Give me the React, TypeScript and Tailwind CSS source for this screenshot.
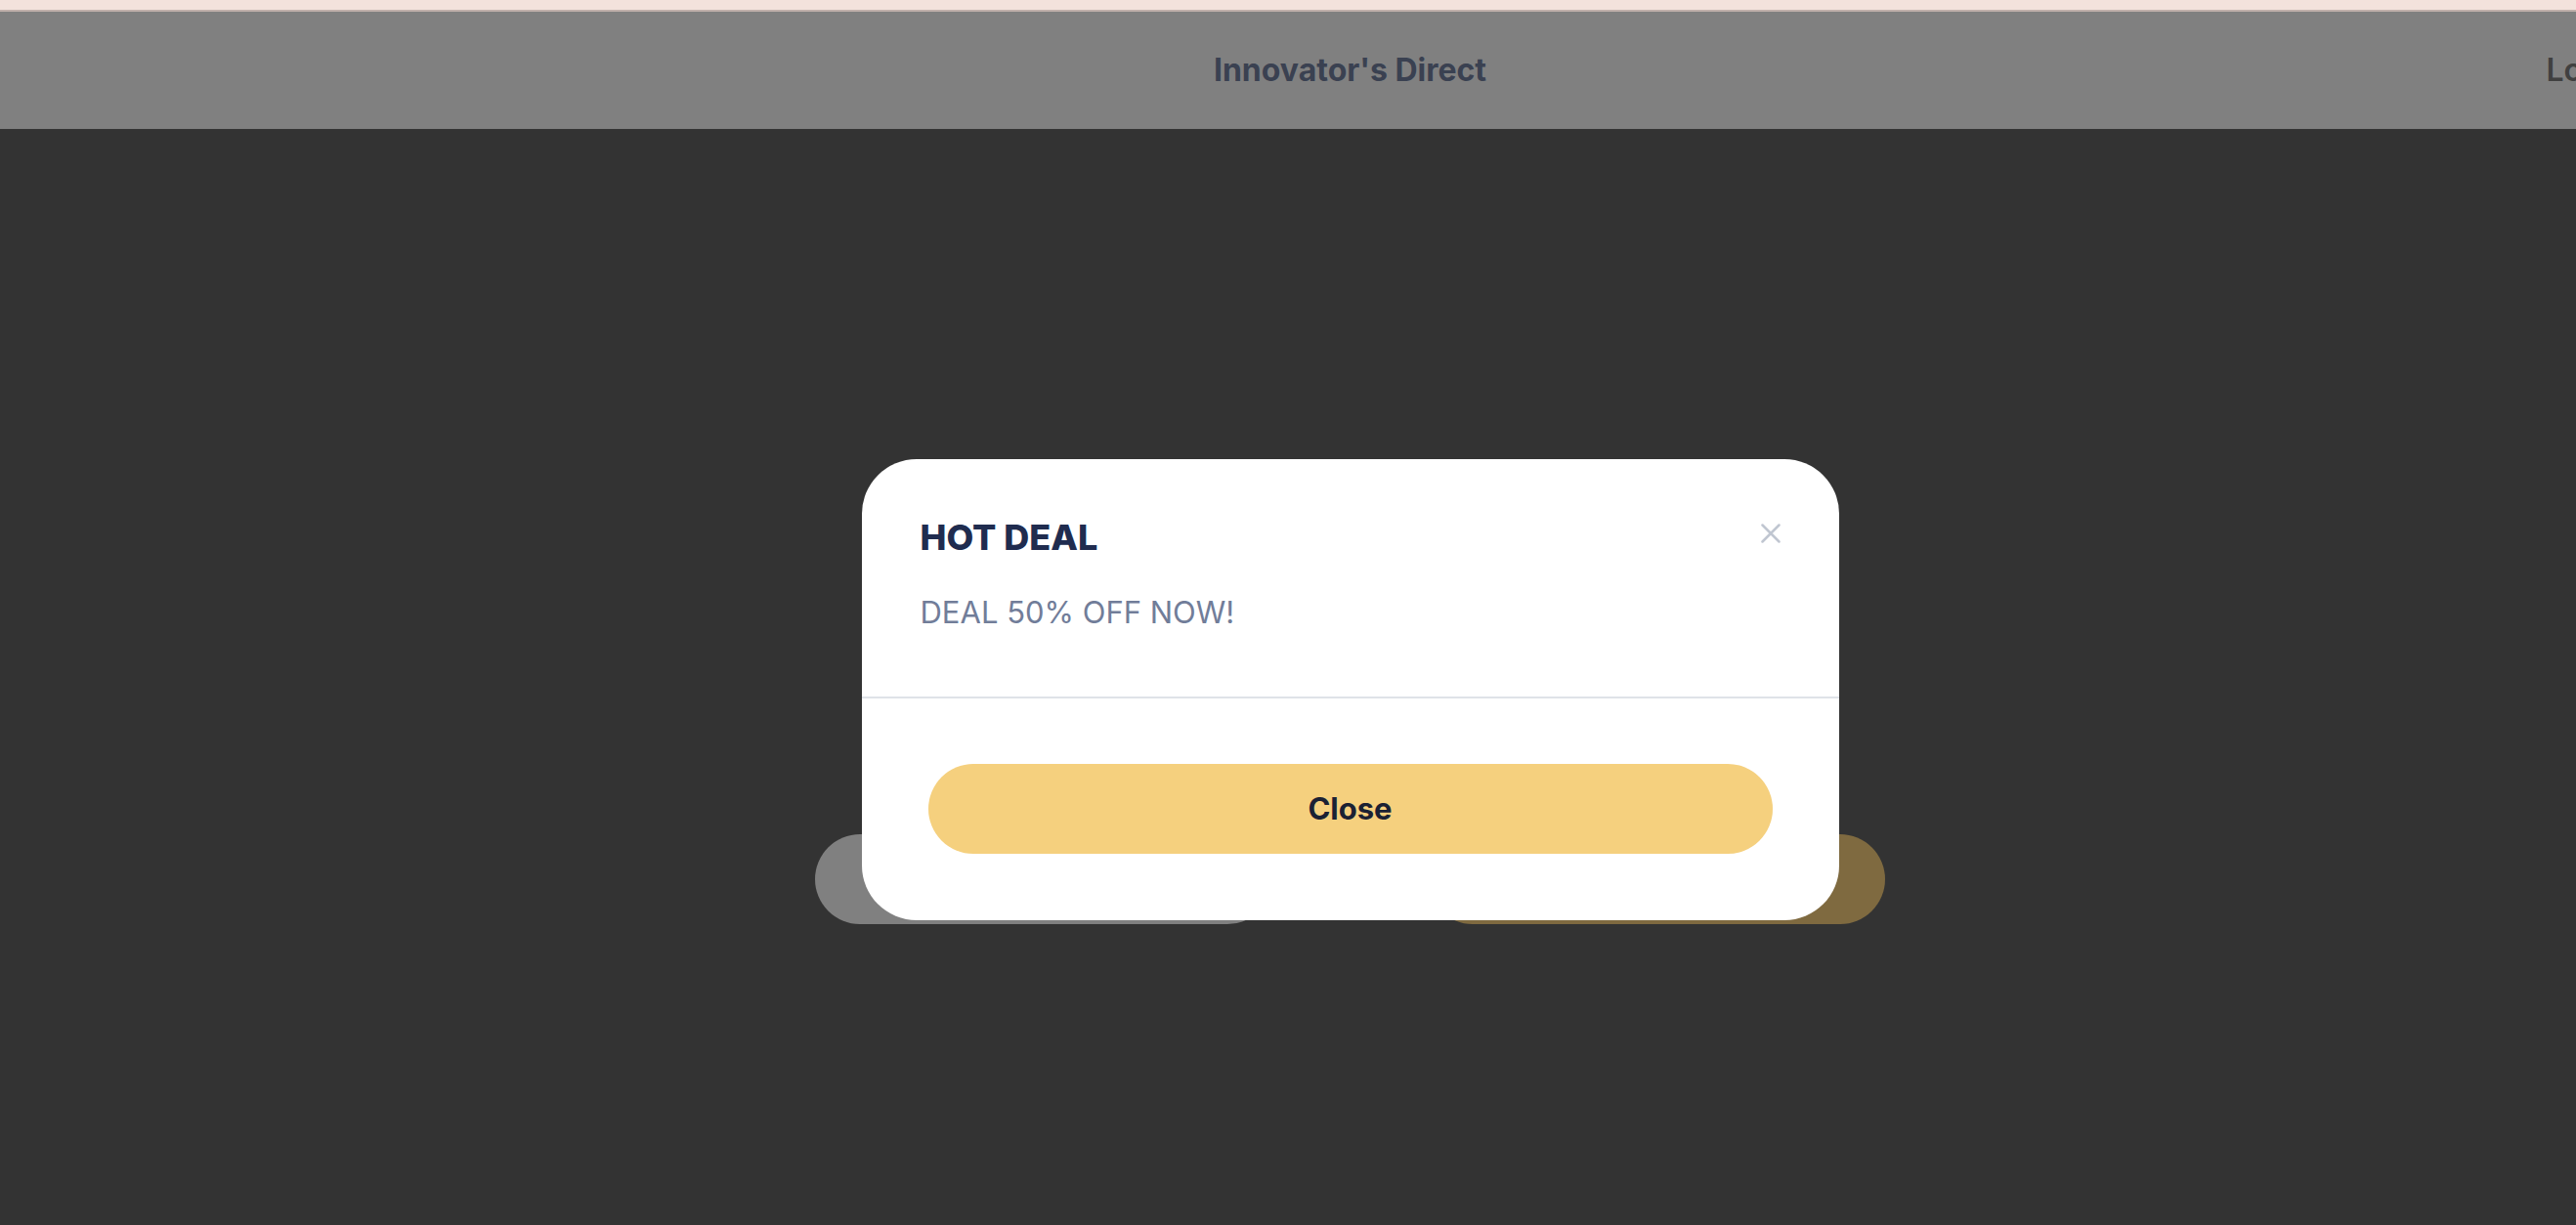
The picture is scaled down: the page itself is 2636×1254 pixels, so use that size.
const font = "font-['Inter','Liberation_Sans',sans-serif]";

/** Header behind the dimmed overlay. */
function TopBar() {
  return (
    <>
      <div className="h-[10px] bg-[#f3e2dc]" />
      <div className="h-[2px] bg-[#c0b0ab]" />
      <header className="grid h-[120px] grid-cols-[1fr_auto_1fr] items-center bg-[#808080]">
        <div />
        <h1 className="text-[32px] leading-[40px] font-bold text-[#3a4151]">Innovator's Direct</h1>
        <span className="justify-self-end pr-[72px] text-[32px] leading-[40px] font-semibold whitespace-nowrap text-[#404040]">
          Login
        </span>
      </header>
    </>
  );
}

function DealModal() {
  return (
    <div className="absolute top-[470px] left-1/2 w-[1000px] -translate-x-1/2 overflow-hidden rounded-[56px] bg-white">
      <div className="border-b-2 border-[#dfe3e8] px-[60px] pt-[60px] pb-[68px]">
        <div className="flex items-start justify-between">
          <h2 className="text-[36px] leading-[40px] font-extrabold text-[#202c4f]">HOT DEAL</h2>
          <button type="button" className="mt-[6px] text-[#c0c6d1]">
            <svg width="20" height="20" viewBox="0 0 20 20" fill="none" stroke="currentColor" strokeWidth="2.5" strokeLinecap="round">
              <path d="M1.5 1.5l17 17M18.5 1.5l-17 17" />
            </svg>
          </button>
        </div>
        <p className="mt-[39px] text-[31px] leading-[36px] text-[#717d99]">DEAL 50% OFF NOW!</p>
      </div>
      <div className="px-[68px] pt-[67px] pb-[68px]">
        <button type="button" className="h-[92px] w-full rounded-full bg-[#f5d07e] text-[31px] font-bold text-[#1b2133]">
          Close
        </button>
      </div>
    </div>
  );
}

export default function App() {
  return (
    <div className={`h-screen w-full overflow-hidden bg-[#333333] ${font}`}>
      <div className="relative w-[2763px]">
        <TopBar />
        <main className="flex justify-center gap-[159px] pt-[722px]">
          <div className="h-[92px] w-[468px] rounded-full bg-[#808080]" />
          <div className="h-[92px] w-[468px] rounded-full bg-[#7f6a40]" />
        </main>
        <DealModal />
      </div>
    </div>
  );
}
